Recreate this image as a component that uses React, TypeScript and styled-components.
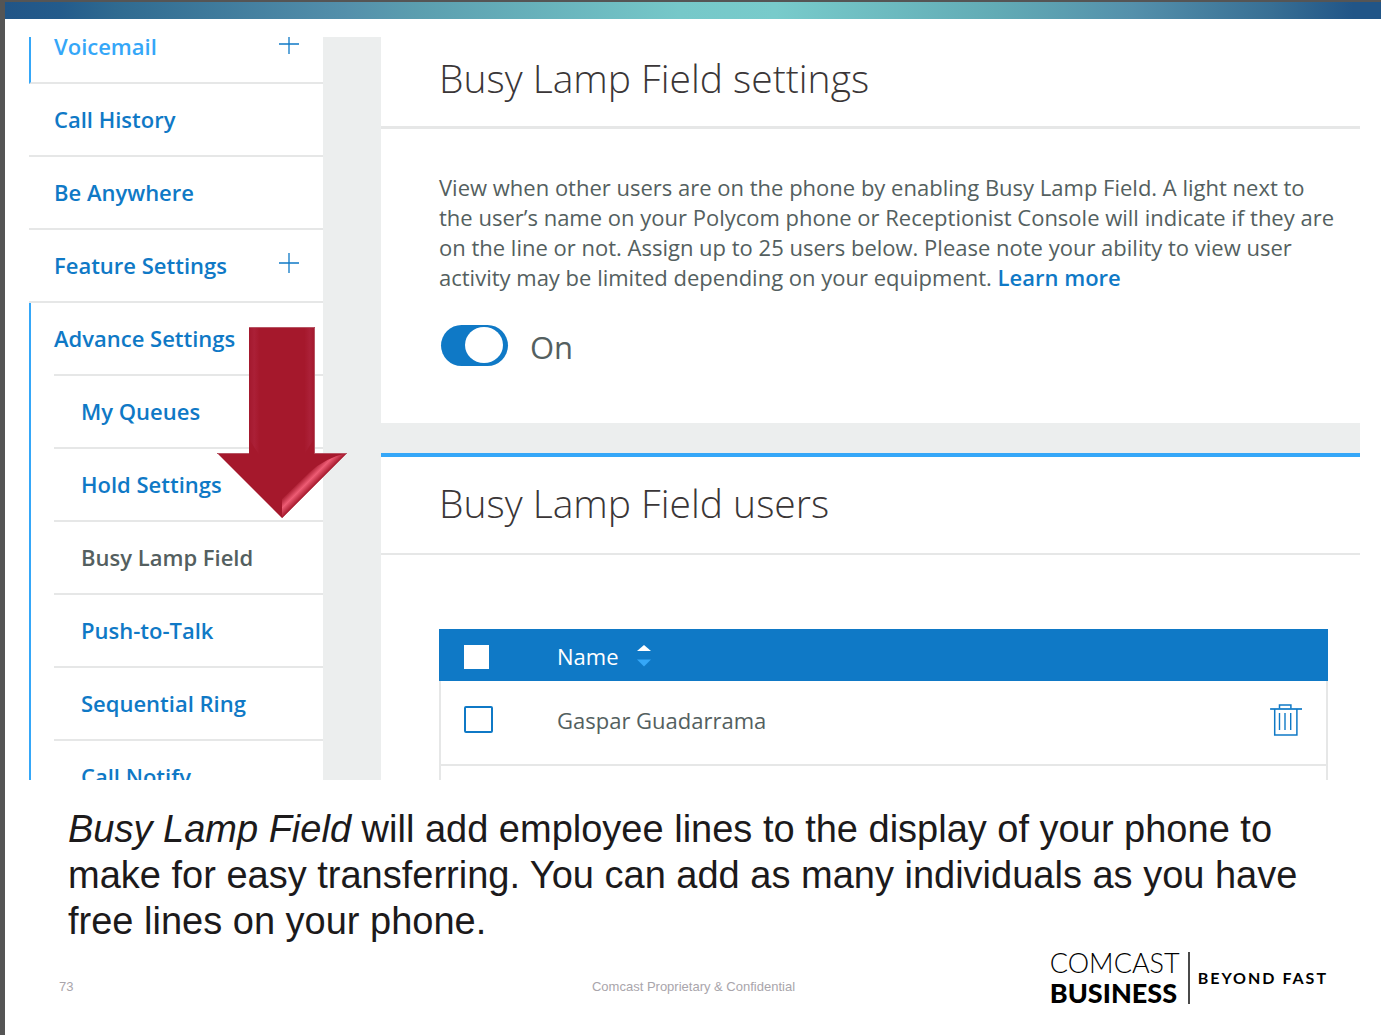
import React, { useState } from "react";
import styled, { createGlobalStyle } from "styled-components";

const color = {
  frame: "#555555",
  blue: "#0f79c6",
  sky: "#35a7f8",
  rule: "#e6e7e7",
  grey: "#eceeee",
  text: "#545f60",
  heading: "#3a3637",
};

const GlobalStyle = createGlobalStyle`
  *, *::before, *::after { box-sizing: border-box; }
  body { margin: 0; background: #ffffff; }
  h1, h2, p, ul { margin: 0; padding: 0; }
  ul { list-style: none; }
`;

const Slide = styled.main`
  min-height: 100vh;
  display: flex;
  flex-direction: column;
  border-top: 2px solid ${color.frame};
  border-left: 5px solid ${color.frame};
  background: #ffffff;
  font-family: "Open Sans", "Noto Sans", sans-serif;
`;

const Band = styled.div`
  height: 17px;
  background: linear-gradient(
    90deg,
    #215587 0%,
    #235b8b 4%,
    #2f6a90 8%,
    #5490ab 25%,
    #5b9eaf 30%,
    #76c8c9 49%,
    #78cbcb 56%,
    #62abb5 72%,
    #5490ab 82%,
    #386f94 92%,
    #215587 98%
  );
`;

const Portal = styled.section`
  position: relative;
  display: grid;
  grid-template-columns: 294px 58px minmax(0, 1fr);
  height: 743px;
  margin: 18px 21px 0 24px;
  overflow: hidden;
`;

const Gutter = styled.div`
  background: ${color.grey};
`;

const NavList = styled.ul`
  margin-top: -26px;
`;

const NavRow = styled.li<{ $active?: boolean }>`
  display: flex;
  align-items: center;
  justify-content: space-between;
  height: 73px;
  padding: 0 24px 2px ${(p) => (p.$active ? "23px" : "25px")};
  border-bottom: 2px solid ${color.rule};
  border-left: ${(p) => (p.$active ? `2px solid ${color.sky}` : "0")};
`;

const NavGroup = styled.li`
  border-left: 2px solid ${color.sky};
  padding-left: 23px;
`;

const GroupRow = styled.div<{ $child?: boolean }>`
  display: flex;
  align-items: center;
  height: 73px;
  padding-bottom: 2px;
  padding-left: ${(p) => (p.$child ? "27px" : "0")};
  border-bottom: 2px solid ${color.rule};
`;

const NavLink = styled.a<{ $tone?: string }>`
  color: ${(p) => p.$tone || color.blue};
  font-size: 22px;
  line-height: 30px;
  font-weight: 600;
  text-decoration: none;
  white-space: nowrap;
`;

const ExpandButton = styled.button`
  display: flex;
  padding: 0 0 4px;
  border: 0;
  background: none;
  color: ${color.blue};
`;

const Content = styled.div`
  display: flex;
  flex-direction: column;
`;

const Card = styled.section<{ $accent?: boolean }>`
  background: #ffffff;
  border-top: ${(p) => (p.$accent ? `4px solid ${color.sky}` : "0")};
`;

const CardHeader = styled.header<{ $first?: boolean }>`
  display: flex;
  align-items: center;
  height: ${(p) => (p.$first ? "92px" : "98px")};
  padding: 0 58px ${(p) => (p.$first ? "8px" : "4px")};
  border-bottom: ${(p) => (p.$first ? "3px" : "2px")} solid ${color.rule};
`;

const Title = styled.h2`
  color: ${color.heading};
  font-size: 39px;
  line-height: 52px;
  font-weight: 300;
`;

const SettingsBody = styled.div`
  padding: 43px 20px 57px 58px;
`;

const Description = styled.p`
  color: ${color.text};
  font-size: 22px;
  line-height: 30px;
`;

const LearnMore = styled.a`
  color: ${color.blue};
  font-weight: 600;
  text-decoration: none;
`;

const ToggleLabel = styled.label`
  display: flex;
  align-items: center;
  gap: 22px;
  margin-top: 32px;
  padding-left: 2px;
  height: 42px;
  color: ${color.text};
  font-size: 31px;
  line-height: 42px;
`;

const ToggleText = styled.span`
  padding-top: 4px;
`;

const Toggle = styled.input`
  appearance: none;
  display: flex;
  align-items: center;
  width: 67px;
  height: 41px;
  margin: 0;
  padding: 0 5px;
  border-radius: 21px;
  background: ${color.blue};
  &::before {
    content: "";
    width: 38px;
    height: 36px;
    border-radius: 50%;
    background: #ffffff;
  }
  &:checked {
    justify-content: flex-end;
  }
`;

const Divider = styled.div`
  height: 30px;
  flex-shrink: 0;
  background: ${color.grey};
`;

const UsersBody = styled.div`
  padding: 74px 32px 0 58px;
`;

const UserTable = styled.table`
  width: 100%;
  border-collapse: separate;
  border-spacing: 0;
  text-align: left;
  font-size: 22px;
  line-height: 30px;
`;

const HeadCell = styled.th<{ $width?: number }>`
  width: ${(p) => (p.$width ? `${p.$width}px` : "auto")};
  height: 52px;
  padding: 4px 0 0 25px;
  background: ${color.blue};
  color: #ffffff;
  font-weight: 500;
  &:nth-child(2) { padding-left: 0; }
`;

const Cell = styled.td`
  height: 85px;
  padding: 0 0 6px;
  border-bottom: 2px solid ${color.rule};
  color: ${color.text};
  &:first-child {
    padding-left: 23px;
    border-left: 2px solid ${color.rule};
  }
  &:last-child {
    border-right: 2px solid ${color.rule};
  }
`;

const SortButton = styled.button`
  display: flex;
  align-items: center;
  gap: 18px;
  padding: 0 0 2px;
  border: 0;
  background: none;
  color: inherit;
  font: inherit;
`;

const Tick = styled.input<{ $head?: boolean }>`
  appearance: none;
  display: block;
  width: ${(p) => (p.$head ? "25px" : "29px")};
  height: ${(p) => (p.$head ? "24px" : "27px")};
  margin: 0;
  border: ${(p) => (p.$head ? "0" : `2px solid ${color.blue}`)};
  border-radius: ${(p) => (p.$head ? "0" : "2px")};
  background: #ffffff;
  &:checked { background: ${color.sky}; }
`;

const DeleteButton = styled.button`
  display: flex;
  padding: 0;
  border: 0;
  background: none;
  color: ${color.blue};
`;

const Pointer = styled.svg`
  position: absolute;
  left: 188px;
  top: 290px;
`;

const Caption = styled.p`
  margin: 26px 60px 0 63px;
  color: #1c1a1b;
  font-family: "Liberation Sans", Arial, sans-serif;
  font-size: 38px;
  line-height: 46px;
`;

const Footer = styled.footer`
  display: grid;
  grid-template-columns: 1fr auto 1fr;
  align-items: center;
  margin-top: 4px;
  padding: 0 53px 0 54px;
  font-family: "Liberation Sans", Arial, sans-serif;
`;

const FootNote = styled.span`
  padding-top: 18px;
  color: #a9a5ab;
  font-size: 13px;
  line-height: 16px;
`;

const Brand = styled.div`
  justify-self: end;
  display: flex;
  align-items: center;
  gap: 8px;
  color: #000000;
  font-family: Lato, "Open Sans", sans-serif;
  white-space: nowrap;
`;

const BrandName = styled.div`
  display: flex;
  flex-direction: column;
  font-size: 27px;
  line-height: 30px;
  font-weight: 300;
`;

const BrandStrong = styled.strong`
  font-weight: 900;
`;

const BrandRule = styled.span`
  width: 2px;
  height: 52px;
  background: #4a4a4a;
`;

const Tagline = styled.span`
  font-size: 16px;
  line-height: 20px;
  font-weight: 700;
  letter-spacing: 2px;
`;

const PlusIcon = () => (
  <svg width="20" height="20" viewBox="0 0 20 20" aria-hidden="true">
    <path d="M0 10H20M10 0V20" stroke="currentColor" strokeWidth="1.300" />
  </svg>
);

const SortIcon = () => (
  <svg width="14" height="22" viewBox="0 0 14 22" aria-hidden="true">
    <path d="M7 0L14 6H0Z" fill="#ffffff" />
    <path d="M0 14.500H14L7 21.500Z" fill={color.sky} />
  </svg>
);

const TrashIcon = () => (
  <svg width="32" height="32" viewBox="0 0 32 32" fill="none" stroke="currentColor" aria-hidden="true">
    <path d="M0 5H32" strokeWidth="1.700" />
    <path d="M9.500 4.500V.9H20.900V4.500" strokeWidth="1.500" />
    <path d="M4.700 5V31H26.900V5" strokeWidth="1.500" />
    <path d="M9.500 9V26M15 9V26M20.700 9V26" strokeWidth="1.400" />
  </svg>
);

const DownArrow = () => (
  <Pointer width="130" height="191" viewBox="0 0 130 191" aria-hidden="true">
    <defs>
      <linearGradient id="shaft" x1="32" x2="98" y1="0" y2="0" gradientUnits="userSpaceOnUse">
        <stop offset="0" stopColor="#a3182d" />
        <stop offset="0.08" stopColor="#ab2037" />
        <stop offset="0.16" stopColor="#a5182c" />
        <stop offset="0.84" stopColor="#a5182c" />
        <stop offset="0.92" stopColor="#ab2037" />
        <stop offset="1" stopColor="#a3182d" />
      </linearGradient>
      <linearGradient id="shine" x1="88" y1="148" x2="98" y2="158" gradientUnits="userSpaceOnUse">
        <stop offset="0" stopColor="#a5182c" />
        <stop offset="0.5" stopColor="#ee5c74" />
        <stop offset="1" stopColor="#a5182c" />
      </linearGradient>
    </defs>
    <path d="M32 0H98V126H130L65 191L0 126H32Z" fill="#a5182c" />
    <path d="M32 1H97V112L88 126L80 136H50L41 126L32 112Z" fill="url(#shaft)" />
    <path d="M65 191V172L93 145Q108 131 130 126Z" fill="url(#shine)" />
    <path d="M32 .5H97.500V126.500H129M0 126.500H32" fill="none" stroke="#b75564" />
  </Pointer>
);

const advancedPages = [
  "My Queues",
  "Hold Settings",
  "Busy Lamp Field",
  "Push-to-Talk",
  "Sequential Ring",
  "Call Notify",
];

export default function App() {
  const [enabled, setEnabled] = useState(true);

  return (
    <>
      <GlobalStyle />
      <Slide>
        <Band />
        <Portal>
          <nav aria-label="Settings">
            <NavList>
              <NavRow $active>
                <NavLink href="#voicemail" $tone={color.sky}>Voicemail</NavLink>
                <ExpandButton aria-label="Expand Voicemail"><PlusIcon /></ExpandButton>
              </NavRow>
              <NavRow><NavLink href="#history">Call History</NavLink></NavRow>
              <NavRow><NavLink href="#anywhere">Be Anywhere</NavLink></NavRow>
              <NavRow>
                <NavLink href="#features">Feature Settings</NavLink>
                <ExpandButton aria-label="Expand Feature Settings"><PlusIcon /></ExpandButton>
              </NavRow>
              <NavGroup>
                <GroupRow><NavLink href="#advance">Advance Settings</NavLink></GroupRow>
                <ul>
                  {advancedPages.map((name) => (
                    <li key={name}>
                      <GroupRow $child>
                        <NavLink
                          href="#advance"
                          $tone={name === "Busy Lamp Field" ? color.text : undefined}
                        >
                          {name}
                        </NavLink>
                      </GroupRow>
                    </li>
                  ))}
                </ul>
              </NavGroup>
            </NavList>
          </nav>
          <Gutter />
          <Content>
            <Card>
              <CardHeader $first><Title>Busy Lamp Field settings</Title></CardHeader>
              <SettingsBody>
                <Description>
                  View when other users are on the phone by enabling Busy Lamp Field. A light next to
                  the user’s name on your Polycom phone or Receptionist Console will indicate if they are
                  on the line or not. Assign up to 25 users below. Please note your ability to view user
                  activity may be limited depending on your equipment.{" "}
                  <LearnMore href="#learn">Learn more</LearnMore>
                </Description>
                <ToggleLabel>
                  <Toggle
                    type="checkbox"
                    role="switch"
                    checked={enabled}
                    onChange={(e) => setEnabled(e.target.checked)}
                  />
                  <ToggleText>{enabled ? "On" : "Off"}</ToggleText>
                </ToggleLabel>
              </SettingsBody>
            </Card>
            <Divider />
            <Card $accent>
              <CardHeader><Title>Busy Lamp Field users</Title></CardHeader>
              <UsersBody>
                <UserTable>
                  <thead>
                    <tr>
                      <HeadCell $width={118}>
                        <Tick $head type="checkbox" aria-label="Select all users" />
                      </HeadCell>
                      <HeadCell>
                        <SortButton>Name<SortIcon /></SortButton>
                      </HeadCell>
                      <HeadCell $width={58} aria-label="Actions" />
                    </tr>
                  </thead>
                  <tbody>
                    <tr>
                      <Cell><Tick type="checkbox" aria-label="Select Gaspar Guadarrama" /></Cell>
                      <Cell>Gaspar Guadarrama</Cell>
                      <Cell>
                        <DeleteButton aria-label="Delete Gaspar Guadarrama"><TrashIcon /></DeleteButton>
                      </Cell>
                    </tr>
                    <tr><Cell /><Cell /><Cell /></tr>
                  </tbody>
                </UserTable>
              </UsersBody>
            </Card>
          </Content>
          <DownArrow />
        </Portal>
        <Caption>
          <em>Busy Lamp Field</em> will add employee lines to the display of your phone to make for
          easy transferring. You can add as many individuals as you have free lines on your phone.
        </Caption>
        <Footer>
          <FootNote>73</FootNote>
          <FootNote>Comcast Proprietary &amp; Confidential</FootNote>
          <Brand>
            <BrandName>
              <span>COMCAST</span>
              <BrandStrong>BUSINESS</BrandStrong>
            </BrandName>
            <BrandRule />
            <Tagline>BEYOND FAST</Tagline>
          </Brand>
        </Footer>
      </Slide>
    </>
  );
}
